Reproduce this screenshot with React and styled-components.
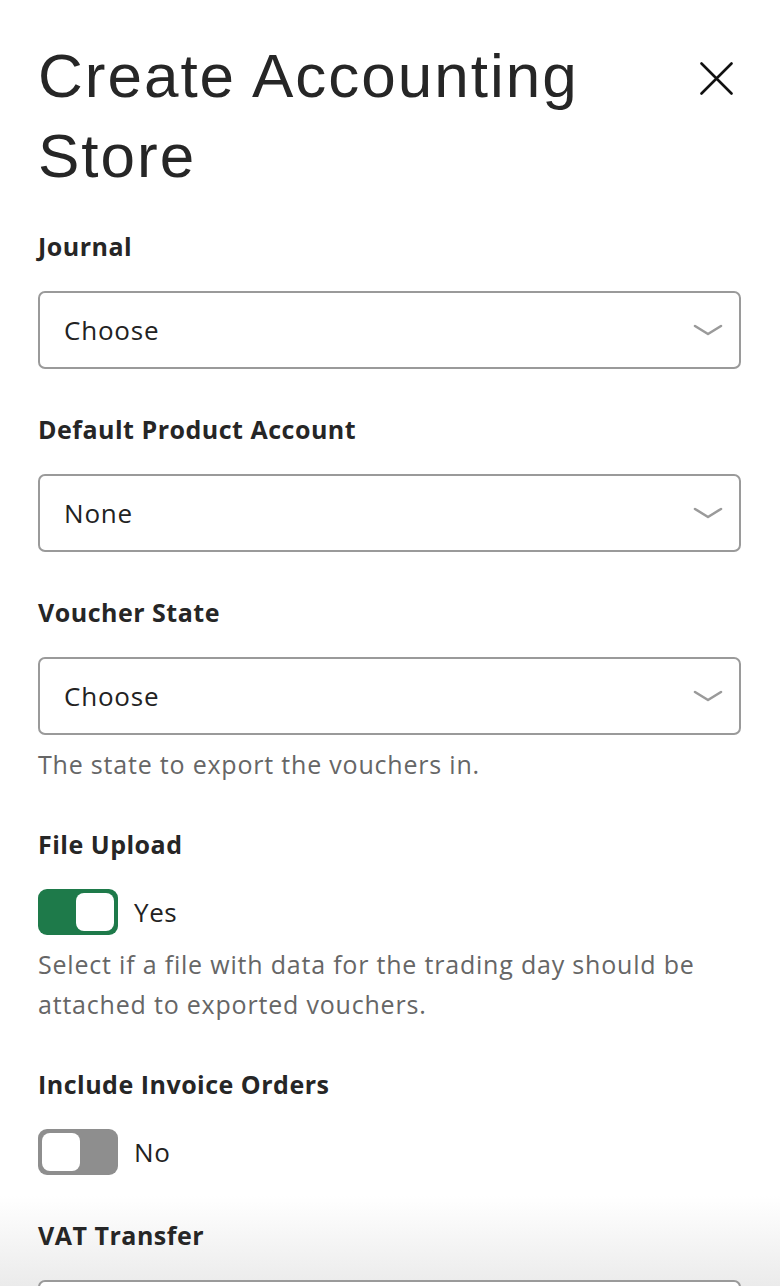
import React, { useState } from "react";
import styled, { createGlobalStyle } from "styled-components";

const GlobalStyle = createGlobalStyle`
  body {
    margin: 0;
    background: #ffffff;
    font-family: "Open Sans", "Noto Sans", sans-serif;
    color: #222222;
  }
`;

const Panel = styled.div`
  width: 780px;
  height: 1286px;
  overflow: hidden;
  box-sizing: border-box;
  padding: 36px 39px 0 38px;
  background: linear-gradient(to bottom, #ffffff 0, #ffffff 1196px, #ebebeb 1286px);
`;

const Header = styled.header`
  display: flex;
  justify-content: space-between;
  align-items: flex-start;
`;

const Title = styled.h1`
  margin: 0;
  width: 600px;
  font-family: "Liberation Sans", Arial, sans-serif;
  font-weight: 400;
  font-size: 62px;
  line-height: 80px;
  color: #262626;
  letter-spacing: 2px;
`;

const CloseButton = styled.button`
  display: flex;
  align-items: center;
  justify-content: center;
  width: 40px;
  height: 40px;
  margin: 22px 5px 0 0;
  padding: 0;
  border: 0;
  background: none;
  color: #111111;
  cursor: pointer;
`;

const Form = styled.form`
  display: flex;
  flex-direction: column;
  gap: 44px;
  margin-top: 34px;
`;

const Field = styled.div`
  display: flex;
  flex-direction: column;
`;

const Label = styled.label`
  font-size: 25px;
  line-height: 32px;
  font-weight: 700;
  letter-spacing: 0.5px;
  color: #262626;
  margin-bottom: 29px;
`;

const SelectBox = styled.div`
  display: flex;
  align-items: center;
  justify-content: space-between;
  height: 78px;
  box-sizing: border-box;
  border: 2px solid #9a9a9a;
  border-radius: 7px;
  padding: 0 16px 0 24px;
  font-size: 26px;
  letter-spacing: 0.8px;
  color: #222222;
  background: #ffffff;
`;

const Help = styled.p`
  margin: 9px 0 0;
  font-size: 25px;
  line-height: 40px;
  letter-spacing: 0.8px;
  color: #666666;
`;

const ToggleRow = styled.div`
  display: flex;
  align-items: center;
  gap: 16px;
  font-size: 26px;
  letter-spacing: 0.6px;
  color: #222222;
`;

const Track = styled.button`
  display: flex;
  justify-content: ${(p) => (p.on ? "flex-end" : "flex-start")};
  align-items: center;
  width: 80px;
  height: 46px;
  padding: 4px;
  box-sizing: border-box;
  border: 0;
  border-radius: 9px;
  background: ${(p) => (p.on ? "#1e7a4a" : "#8e8e8e")};
  cursor: pointer;
`;

const Knob = styled.span`
  width: 38px;
  height: 38px;
  border-radius: 8px;
  background: #ffffff;
`;

const Chevron = () => (
  <svg width="30" height="12" viewBox="0 0 30 12" fill="none">
    <path d="M2 2 L15 10 L28 2" stroke="#9a9a9a" strokeWidth="2.6" strokeLinecap="round" strokeLinejoin="round" />
  </svg>
);

const Select = ({ value }) => (
  <SelectBox>
    <span>{value}</span>
    <Chevron />
  </SelectBox>
);

const Toggle = ({ initial }) => {
  const [on, setOn] = useState(initial);
  return (
    <ToggleRow>
      <Track type="button" on={on ? 1 : 0} onClick={() => setOn(!on)}>
        <Knob />
      </Track>
      <span>{on ? "Yes" : "No"}</span>
    </ToggleRow>
  );
};

const App = () => (
  <>
    <GlobalStyle />
    <Panel>
      <Header>
        <Title>Create Accounting Store</Title>
        <CloseButton type="button" aria-label="Close">
          <svg width="33" height="33" viewBox="0 0 33 33">
            <path d="M1.5 1.5 L31.5 31.5 M31.5 1.5 L1.5 31.5" stroke="#111" strokeWidth="2.6" strokeLinecap="round" />
          </svg>
        </CloseButton>
      </Header>
      <Form>
        <Field>
          <Label>Journal</Label>
          <Select value="Choose" />
        </Field>
        <Field>
          <Label>Default Product Account</Label>
          <Select value="None" />
        </Field>
        <Field>
          <Label>Voucher State</Label>
          <Select value="Choose" />
          <Help>The state to export the vouchers in.</Help>
        </Field>
        <Field>
          <Label>File Upload</Label>
          <Toggle initial={true} />
          <Help>Select if a file with data for the trading day should be attached to exported vouchers.</Help>
        </Field>
        <Field>
          <Label>Include Invoice Orders</Label>
          <Toggle initial={false} />
        </Field>
        <Field>
          <Label>VAT Transfer</Label>
          <Select value="Choose" />
        </Field>
      </Form>
    </Panel>
  </>
);

export default App;
